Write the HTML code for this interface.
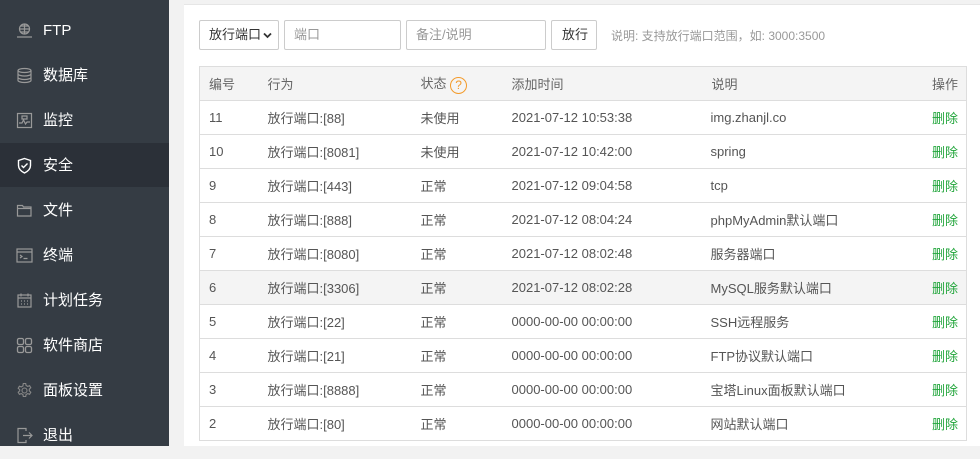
<!DOCTYPE html>
<html><head><meta charset="utf-8"><style>
*{margin:0;padding:0;box-sizing:border-box}
body{width:980px;height:446px;overflow:hidden;background:#f2f2f2;font-family:"Liberation Sans","Noto Sans CJK SC",sans-serif;position:relative}
.side{position:absolute;left:0;top:0;width:169px;height:446px;background:#353c44}
.item{position:absolute;left:0;width:169px;height:44px;color:#fff;font-size:15px;line-height:46px;padding-left:43px}
.item.act{background:#2b3038}
.item svg{position:absolute;left:16px;top:14px;width:17px;height:17px}
.panel{position:absolute;left:184px;top:4px;width:796px;height:442px;background:#fff;border-top:1px solid #e6e6e6}
.ctl{position:absolute;top:20px;height:30px;border:1px solid #ccc;border-radius:2px;font-size:13px;line-height:28px;padding-left:9px;color:#999;background:#fff}
table{position:absolute;left:199px;top:66px;width:768px;border-collapse:collapse;font-size:13px;color:#555}
td,th{height:34px;border-bottom:1px solid #ddd;text-align:left;font-weight:normal;padding:0}
th{background:#f4f4f4;color:#666}
table{border:1px solid #ddd}
tr.hl td{background:#f4f4f4}
.del{color:#20a53a;text-align:right;padding-right:8px}
</style></head><body>
<div class="side">
<div class="item" style="top:8px"><svg viewBox="0 0 17 17" fill="none" stroke="#999" stroke-width="1.2"><circle cx="8.5" cy="7" r="5"/><path d="M3.5 7h10M8.5 2v10M5 4h7M5 10h7M1 15h15"/></svg>FTP</div>
<div class="item" style="top:53px"><svg viewBox="0 0 17 17" fill="none" stroke="#999" stroke-width="1.2"><ellipse cx="8.5" cy="3.5" rx="6.5" ry="2"/><path d="M2 3.5v10c0 1 3 2 6.5 2s6.5-1 6.5-2v-10M2 7c0 1 3 2 6.5 2s6.5-1 6.5-2M2 10.5c0 1 3 2 6.5 2s6.5-1 6.5-2"/></svg>数据库</div>
<div class="item" style="top:98px"><svg viewBox="0 0 17 17" fill="none" stroke="#999" stroke-width="1.2"><rect x="1.5" y="1.5" width="14" height="14"/><path d="M3 11h3l1.5-3 2 4 1.5-2h3M6 4h5v3H6z"/></svg>监控</div>
<div class="item act" style="top:143px"><svg viewBox="0 0 17 17" fill="none" stroke="#fff" stroke-width="1.4"><path d="M8.5 1.5l6 2v5c0 4-3 6-6 7.5-3-1.5-6-3.5-6-7.5v-5z"/><path d="M5.5 8.5l2 2 4-4"/></svg>安全</div>
<div class="item" style="top:188px"><svg viewBox="0 0 17 17" fill="none" stroke="#999" stroke-width="1.2"><path d="M1.5 3.5h5l1 1.5h7.5v9h-13.5z"/><path d="M1.5 6.5h14"/></svg>文件</div>
<div class="item" style="top:233px"><svg viewBox="0 0 17 17" fill="none" stroke="#999" stroke-width="1.2"><rect x="1" y="2" width="15" height="13"/><path d="M1 5h15M4 8l2 1.5-2 1.5M7.5 11.5h4"/></svg>终端</div>
<div class="item" style="top:278px"><svg viewBox="0 0 17 17" fill="none" stroke="#999" stroke-width="1.2"><rect x="2" y="3" width="13" height="12"/><path d="M2 6h13M5 1.5v3M12 1.5v3M5 9h1M8 9h1M11 9h1M5 12h1M8 12h1M11 12h1"/></svg>计划任务</div>
<div class="item" style="top:323px"><svg viewBox="0 0 17 17" fill="none" stroke="#999" stroke-width="1.3"><rect x="1.5" y="1.5" width="6" height="6" rx="1.5"/><rect x="9.5" y="1.5" width="6" height="6" rx="1.5"/><rect x="1.5" y="9.5" width="6" height="6" rx="1.5"/><rect x="9.5" y="9.5" width="6" height="6" rx="1.5"/></svg>软件商店</div>
<div class="item" style="top:368px"><svg viewBox="0 0 17 17" fill="none" stroke="#888" stroke-width="1.1"><circle cx="8.5" cy="8.5" r="2.5"/><path d="M7.3 1.5h2.4l.4 2 1.6.9 1.9-.7 1.2 2.1-1.5 1.3v1.8l1.5 1.3-1.2 2.1-1.9-.7-1.6.9-.4 2H7.3l-.4-2-1.6-.9-1.9.7-1.2-2.1 1.5-1.3V7.6L2.2 6.3l1.2-2.1 1.9.7 1.6-.9z"/></svg>面板设置</div>
<div class="item" style="top:413px"><svg viewBox="0 0 17 17" fill="none" stroke="#999" stroke-width="1.2"><path d="M10 4V1.5H2v14h8V13M7 8.5h9M13 5.5l3 3-3 3"/></svg>退出</div>
</div>
<div class="panel"></div>
<div class="ctl" style="left:199px;width:80px;color:#333">放行端口<svg style="position:absolute;right:6px;top:11px" width="9" height="7" viewBox="0 0 9 7"><path d="M1 1.5l3.5 3.5 3.5-3.5" fill="none" stroke="#333" stroke-width="1.8"/></svg></div>
<div class="ctl" style="left:284px;width:117px">端口</div>
<div class="ctl" style="left:406px;width:140px">备注/说明</div>
<div class="ctl" style="left:551px;width:46px;color:#333;padding-left:10px">放行</div>
<div style="position:absolute;left:611px;top:27px;font-size:12px;color:#999">说明: 支持放行端口范围，如: 3000:3500</div>
<table>
<tr><th style="width:60px;padding-left:9px">编号</th><th style="width:153px;padding-left:8px">行为</th><th style="width:99px;padding-left:8px">状态 <span style="display:inline-block;width:17px;height:17px;border:1.5px solid #f39b2b;border-radius:50%;color:#f39b2b;font-size:12px;line-height:14px;text-align:center;vertical-align:middle">?</span></th><th style="width:199px;padding-left:0">添加时间</th><th style="padding-left:1px">说明</th><th class="del" style="color:#666">操作</th></tr>
<tr><td style="padding-left:9px">11</td><td style="padding-left:8px">放行端口:[88]</td><td style="padding-left:8px">未使用</td><td>2021-07-12 10:53:38</td><td>img.zhanjl.co</td><td class="del">删除</td></tr>
<tr><td style="padding-left:9px">10</td><td style="padding-left:8px">放行端口:[8081]</td><td style="padding-left:8px">未使用</td><td>2021-07-12 10:42:00</td><td>spring</td><td class="del">删除</td></tr>
<tr><td style="padding-left:9px">9</td><td style="padding-left:8px">放行端口:[443]</td><td style="padding-left:8px">正常</td><td>2021-07-12 09:04:58</td><td>tcp</td><td class="del">删除</td></tr>
<tr><td style="padding-left:9px">8</td><td style="padding-left:8px">放行端口:[888]</td><td style="padding-left:8px">正常</td><td>2021-07-12 08:04:24</td><td>phpMyAdmin默认端口</td><td class="del">删除</td></tr>
<tr><td style="padding-left:9px">7</td><td style="padding-left:8px">放行端口:[8080]</td><td style="padding-left:8px">正常</td><td>2021-07-12 08:02:48</td><td>服务器端口</td><td class="del">删除</td></tr>
<tr class="hl"><td style="padding-left:9px">6</td><td style="padding-left:8px">放行端口:[3306]</td><td style="padding-left:8px">正常</td><td>2021-07-12 08:02:28</td><td>MySQL服务默认端口</td><td class="del">删除</td></tr>
<tr><td style="padding-left:9px">5</td><td style="padding-left:8px">放行端口:[22]</td><td style="padding-left:8px">正常</td><td>0000-00-00 00:00:00</td><td>SSH远程服务</td><td class="del">删除</td></tr>
<tr><td style="padding-left:9px">4</td><td style="padding-left:8px">放行端口:[21]</td><td style="padding-left:8px">正常</td><td>0000-00-00 00:00:00</td><td>FTP协议默认端口</td><td class="del">删除</td></tr>
<tr><td style="padding-left:9px">3</td><td style="padding-left:8px">放行端口:[8888]</td><td style="padding-left:8px">正常</td><td>0000-00-00 00:00:00</td><td>宝塔Linux面板默认端口</td><td class="del">删除</td></tr>
<tr><td style="padding-left:9px">2</td><td style="padding-left:8px">放行端口:[80]</td><td style="padding-left:8px">正常</td><td>0000-00-00 00:00:00</td><td>网站默认端口</td><td class="del">删除</td></tr>
</table>
</body></html>
